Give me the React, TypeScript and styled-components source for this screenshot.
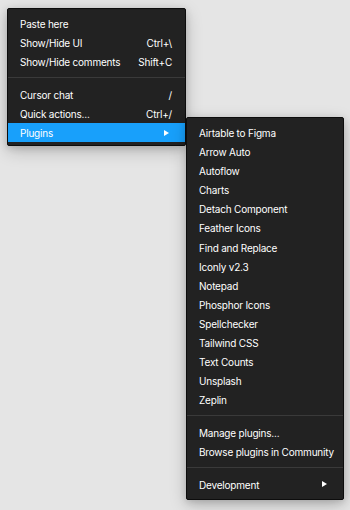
import { FC } from 'react'
import styled, { createGlobalStyle } from 'styled-components'

const GlobalStyle = createGlobalStyle`
  html, body {
    margin: 0;
    padding: 0;
    background: #e5e5e5;
  }
  body {
    font-family: Inter, 'Noto Sans', sans-serif;
    -webkit-font-smoothing: antialiased;
  }
`

const Page = styled.div`
  width: 350px;
  height: 510px;
  padding: 8px 0 0 7px;
  box-sizing: border-box;
`

const Menu = styled.div<{ $width: number; $padBottom: number }>`
  width: ${({ $width }) => $width}px;
  box-sizing: border-box;
  background: #222222;
  border: 1px solid #0d0d0d;
  border-radius: 2px;
  padding: 5px 0 ${({ $padBottom }) => $padBottom}px;
  box-shadow: 0 2px 7px rgba(0, 0, 0, 0.15), 0 5px 17px rgba(0, 0, 0, 0.2);
`

const Row = styled.div<{ $active?: boolean }>`
  position: relative;
  display: flex;
  align-items: center;
  justify-content: space-between;
  box-sizing: border-box;
  height: 19.1px;
  padding: 2px 13px 0 12px;
  font-size: 10px;
  letter-spacing: -0.2px;
  line-height: 17px;
  color: #ffffff;
  background: ${({ $active }) => ($active ? '#18a0fb' : 'transparent')};
  white-space: nowrap;
`

const Shortcut = styled.span`
  color: #ffffff;
`

const Arrow = styled.span`
  width: 0;
  height: 0;
  margin: -2px 3px 0 0;
  border-top: 3px solid transparent;
  border-bottom: 3px solid transparent;
  border-left: 5px solid #ffffff;
`

const Separator = styled.div`
  height: 1px;
  margin: 6px 0 6.5px;
  background: #3a3a3a;
`

const Flyout = styled.div`
  position: absolute;
  left: 178px;
  top: -6px;
  z-index: 2;
`

const plugins = [
  'Airtable to Figma',
  'Arrow Auto',
  'Autoflow',
  'Charts',
  'Detach Component',
  'Feather Icons',
  'Find and Replace',
  'Iconly v2.3',
  'Notepad',
  'Phosphor Icons',
  'Spellchecker',
  'Tailwind CSS',
  'Text Counts',
  'Unsplash',
  'Zeplin',
]

const PluginsMenu: FC = () => (
  <Menu $width={158} $padBottom={5}>
    {plugins.map((p) => (
      <Row key={p}>{p}</Row>
    ))}
    <Separator />
    <Row>Manage plugins...</Row>
    <Row>Browse plugins in Community</Row>
    <Separator />
    <Row>
      Development
      <Arrow />
    </Row>
  </Menu>
)

export default function App() {
  return (
    <Page>
      <GlobalStyle />
      <Menu $width={179} $padBottom={3}>
        <Row>Paste here</Row>
        <Row>
          Show/Hide UI<Shortcut>Ctrl+\</Shortcut>
        </Row>
        <Row>
          Show/Hide comments<Shortcut>Shift+C</Shortcut>
        </Row>
        <Separator />
        <Row>
          Cursor chat<Shortcut>/</Shortcut>
        </Row>
        <Row>
          Quick actions...<Shortcut>Ctrl+/</Shortcut>
        </Row>
        <Row $active>
          Plugins
          <Arrow />
          <Flyout>
            <PluginsMenu />
          </Flyout>
        </Row>
      </Menu>
    </Page>
  )
}
